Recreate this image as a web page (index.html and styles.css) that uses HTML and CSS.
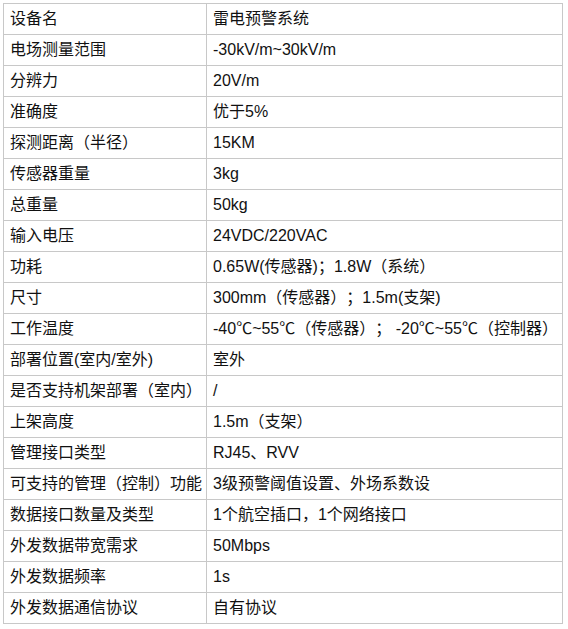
FILE: index.html
```html
<!DOCTYPE html>
<html lang="zh-CN">
<head>
<meta charset="utf-8">
<title>雷电预警系统参数</title>
<link rel="stylesheet" href="styles.css">
</head>
<body>
<table class="spec">
  <colgroup>
    <col class="col-name">
    <col class="col-value">
  </colgroup>
  <tbody>
    <tr><td>设备名</td><td>雷电预警系统</td></tr>
    <tr><td>电场测量范围</td><td>-30kV/m~30kV/m</td></tr>
    <tr><td>分辨力</td><td>20V/m</td></tr>
    <tr><td>准确度</td><td>优于5%</td></tr>
    <tr><td>探测距离（半径）</td><td>15KM</td></tr>
    <tr><td>传感器重量</td><td>3kg</td></tr>
    <tr><td>总重量</td><td>50kg</td></tr>
    <tr><td>输入电压</td><td>24VDC/220VAC</td></tr>
    <tr><td>功耗</td><td>0.65W(传感器)；1.8W（系统）</td></tr>
    <tr><td>尺寸</td><td>300mm（传感器）；1.5m(支架)</td></tr>
    <tr><td>工作温度</td><td>-40℃~55℃（传感器）； -20℃~55℃（控制器）</td></tr>
    <tr><td>部署位置(室内/室外)</td><td>室外</td></tr>
    <tr><td>是否支持机架部署（室内）</td><td>/</td></tr>
    <tr><td>上架高度</td><td>1.5m（支架）</td></tr>
    <tr><td>管理接口类型</td><td>RJ45、RVV</td></tr>
    <tr><td>可支持的管理（控制）功能</td><td>3级预警阈值设置、外场系数设</td></tr>
    <tr><td>数据接口数量及类型</td><td>1个航空插口，1个网络接口</td></tr>
    <tr><td>外发数据带宽需求</td><td>50Mbps</td></tr>
    <tr><td>外发数据频率</td><td>1s</td></tr>
    <tr><td>外发数据通信协议</td><td>自有协议</td></tr>
  </tbody>
</table>
</body>
</html>
```

FILE: styles.css
```css
html, body {
  margin: 0;
  padding: 0;
  background: #ffffff;
}

body {
  padding: 3px 0 0 3px;
  font-family: "Liberation Sans", "Noto Sans CJK SC", sans-serif;
  font-size: 16px;
  color: #111111;
  text-spacing-trim: space-all;
}

.spec {
  border-collapse: collapse;
  table-layout: fixed;
  width: 559px;
}

.col-name {
  width: 203px;
}

.col-value {
  width: 356px;
}

.spec td {
  border: 1px solid #c8c8c8;
  height: 30px;
  padding: 0 0 0 6px;
  line-height: 20px;
  white-space: nowrap;
  overflow: hidden;
  vertical-align: middle;
}
```
